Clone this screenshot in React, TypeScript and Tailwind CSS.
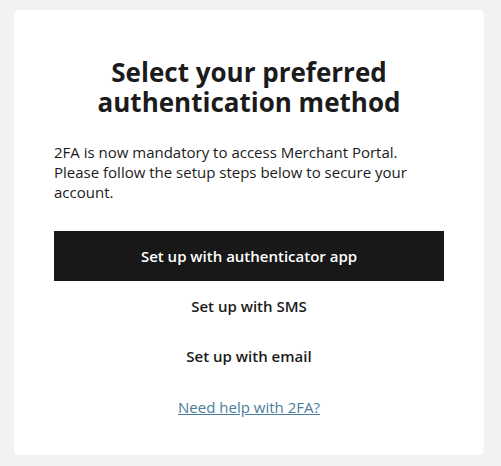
export default function App() {
  return (
    <div className="min-h-[466px] bg-[#f2f2f0] pt-[10px] pl-[14px] font-['Open_Sans',sans-serif] text-[#1b1b1b]">
      <div className="w-[470px] rounded-[5px] bg-white px-10 pt-[47px] pb-[38px]">
        <h1 className="text-center text-[26px] font-bold leading-[30px]">
          Select your preferred
          <br />
          authentication method
        </h1>
        <p className="mt-[25px] text-[15px] leading-[20px]">
          2FA is now mandatory to access Merchant Portal. Please follow the setup steps below to secure your
          account.
        </p>
        <div className="mt-[29px] flex flex-col">
          <button className="h-[50px] bg-[#181818] text-[15px] font-semibold text-white">
            Set up with authenticator app
          </button>
          <button className="h-[50px] text-[15px] font-semibold">Set up with SMS</button>
          <button className="h-[50px] text-[15px] font-semibold">Set up with email</button>
        </div>
        <div className="mt-[16px] text-center leading-[20px]">
          <a href="#" className="text-[15px] text-[#4a7d9c] underline">
            Need help with 2FA?
          </a>
        </div>
      </div>
    </div>
  );
}
